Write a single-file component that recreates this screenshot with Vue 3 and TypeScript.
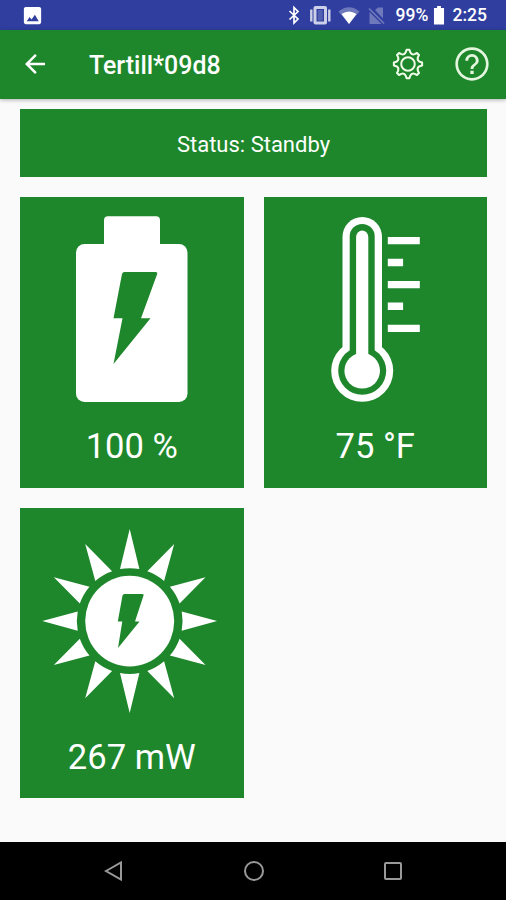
<script setup lang="ts">
interface Ray {
  angle: number
  length: number
}

const batteryLevel = 100
const temperature = 75
const power = 267

const lengths = [92, 89, 87.6, 87.4, 87.6, 89]
const rays: Ray[] = Array.from({ length: 12 }, (_, i) => ({ angle: i * 30, length: lengths[i % 6] }))

const rayPath = (length: number): string => `M0 ${-length} L9.7 -52 A53 53 0 0 0 -9.7 -52 Z`

// Outline of the settings gear: eight teeth joined by rounded valleys.
const gearPath = ((): string => {
  const teeth = 8
  const point = (radius: number, turn: number): string => {
    const a = (turn / teeth) * Math.PI * 2 - Math.PI / 2
    return `${(radius * Math.cos(a)).toFixed(2)} ${(radius * Math.sin(a)).toFixed(2)}`
  }
  const parts: string[] = []
  for (let i = 0; i < teeth; i++) {
    parts.push(`${i === 0 ? 'M' : 'L'}${point(11.9, i - 0.24)}`)
    parts.push(`L${point(14.2, i - 0.13)}`)
    parts.push(`L${point(14.2, i + 0.13)}`)
    parts.push(`L${point(11.9, i + 0.24)}`)
    parts.push(`Q${point(9.6, i + 0.5)} ${point(11.9, i + 0.76)}`)
  }
  return parts.join(' ') + 'Z'
})()
</script>

<template>
  <div class="screen">
    <div class="status-bar">
      <svg class="picture" viewBox="0 0 24 24"><path d="M21 19V5c0-1.100-.9-2-2-2H5c-1.100 0-2 .9-2 2v14c0 1.100.9 2 2 2h14c1.100 0 2-.9 2-2zM6 18l3-4.500 2 2.600 3.500-5L18.500 18z" /></svg>
      <svg class="signals" viewBox="283 0 105 30">
        <path class="line" d="M289.500 11l8.500 8-4 4V7.500l4 4-8.500 8" />
        <g class="dim">
          <rect x="313.500" y="6" width="13.500" height="18.500" rx="2" />
          <path class="line wide" d="M311.300 9.500v12M329.300 9.500v12" />
        </g>
        <rect class="hole" x="316.500" y="9" width="7.500" height="12.500" />
        <rect class="core" x="317.800" y="10" width="4.900" height="10.500" />
        <path class="faint" d="M338.500 11.500Q349 3 359.500 11.500L349 24z" />
        <path d="M341.500 14Q349 9 356.500 14L349 24z" />
        <path class="faint" d="M369.500 12L381.500 24H369.500zM375 10L378 7.500H383V18.500z" />
        <path class="faint line" d="M369 8.500l15 15" />
      </svg>
      <span class="percent">99%</span>
      <svg class="cell" viewBox="0 0 12 20"><path d="M4 0h4v2h3.300v17.500h-10.600V2H4z" /></svg>
      <span class="clock">2:25</span>
    </div>

    <header class="app-bar">
      <svg class="back" viewBox="0 0 24 24"><path d="M20 11H7.830l5.590-5.590L12 4l-8 8 8 8 1.410-1.410L7.830 13H20v-2z" /></svg>
      <h1>Tertill*09d8</h1>
      <svg class="gear" viewBox="-16 -16 32 32">
        <path :d="gearPath" />
        <circle r="6.800" />
      </svg>
      <svg class="help" viewBox="0 0 24 24"><path d="M11 18h2v-2h-2v2zm1-16C6.480 2 2 6.480 2 12s4.480 10 10 10 10-4.480 10-10S17.520 2 12 2zm0 18.400c-4.630 0-8.400-3.770-8.400-8.400S7.370 3.600 12 3.600s8.400 3.770 8.400 8.400-3.770 8.400-8.400 8.400zM12 6c-2.210 0-4 1.790-4 4h1.700c0-1.270 1.030-2.300 2.300-2.300s2.300 1.030 2.300 2.300c0 2-3.150 1.750-3.150 5h1.700c0-2.250 3.150-2.500 3.150-5 0-2.210-1.790-4-4-4z" /></svg>
    </header>

    <main>
      <div class="card state">Status: Standby</div>

      <section class="card tile">
        <svg class="art" viewBox="20 197.400 223.500 220">
          <rect x="104" y="216.700" width="56" height="40" rx="4" />
          <rect x="76" y="244.500" width="111.500" height="158" rx="8.500" />
          <path class="bolt" d="M124.500 272.500H155.500Q158 272.500 157 275L141 318.600H150.500L113.500 364.500L122.500 318.600H113.500L122 274.500Q122.500 272.500 124.500 272.500Z" />
        </svg>
        <p>{{ batteryLevel }} %</p>
      </section>

      <section class="card tile">
        <svg class="art" viewBox="263.500 197.400 223.500 220">
          <rect x="342" y="217.500" width="39.500" height="150" rx="19.700" />
          <circle cx="361.700" cy="371.200" r="31" />
          <g class="bore">
            <rect x="349.200" y="224.300" width="25" height="140" rx="12.500" />
            <circle cx="361.700" cy="371.200" r="24" />
          </g>
          <rect x="355.600" y="231" width="12.200" height="140" rx="6.100" />
          <circle cx="361.700" cy="371.200" r="17.800" />
          <path d="M387.300 237.400h32v7.300h-32zM387.300 259.200h15.300v7.400h-15.300zM387.300 281.300h32v7.300h-32zM387.300 303h15.300v7.400h-15.300zM387.300 325.200h32v7.300h-32z" />
        </svg>
        <p>{{ temperature }} °F</p>
      </section>

      <section class="card tile">
        <svg class="art" viewBox="20 507.900 223.500 220">
          <g transform="translate(129.700 621)">
            <path v-for="ray in rays" :key="ray.angle" :d="rayPath(ray.length)" :transform="`rotate(${ray.angle})`" />
            <ellipse rx="44.500" ry="45.300" />
          </g>
          <path class="bolt" d="M124.500 594H142.500Q144 594 143.500 595.500L135 621.300H139.500L118 648L122.300 621.300H117.800L122.500 595.500Q123 594 124.500 594Z" />
        </svg>
        <p>{{ power }} mW</p>
      </section>
    </main>

    <nav>
      <svg viewBox="0 0 24 24"><path d="M4 12L19 3.500V20.500Z" /></svg>
      <svg viewBox="0 0 24 24"><circle cx="12" cy="12" r="9" /></svg>
      <svg viewBox="0 0 24 24"><rect x="4" y="4" width="16" height="16" rx="1" /></svg>
    </nav>
  </div>
</template>

<style>
body {
  margin: 0;
  background: #fafafa;
}
</style>

<style scoped>
.screen {
  display: flex;
  flex-direction: column;
  width: 506px;
  height: 900px;
  overflow: hidden;
  background: #fafafa;
  color: #fff;
  font-family: Roboto, "Liberation Sans", sans-serif;
}

svg {
  display: block;
  flex: none;
  fill: #fff;
}

.status-bar {
  display: flex;
  align-items: center;
  height: 30px;
  box-sizing: border-box;
  padding-left: 21px;
  background: #303f9f;
  font-size: 17.500px;
  font-weight: 500;
  line-height: 32px;
}

.picture {
  width: 23px;
  height: 23px;
}

.signals {
  width: 105px;
  height: 30px;
  margin-left: 239px;
}

.line {
  fill: none;
  stroke: #fff;
  stroke-width: 1.700;
}

.wide {
  stroke-width: 2.400;
}

.dim {
  opacity: 0.75;
}

.faint {
  opacity: 0.3;
}

.hole {
  fill: #303f9f;
}

.core {
  fill: #5361b3;
}

.percent {
  width: 37px;
  margin-left: 7.500px;
  white-space: nowrap;
}

.cell {
  width: 12px;
  height: 19px;
}

.clock {
  margin-left: 8px;
}

.app-bar {
  display: flex;
  position: relative;
  align-items: center;
  height: 69px;
  box-sizing: border-box;
  flex: none;
  padding: 0 0 1px 20px;
  background: #1e872b;
  box-shadow: 0 1px 4px rgba(0, 0, 0, 0.3);
}

.back {
  width: 30px;
  height: 30px;
}

h1 {
  width: 302px;
  margin: 3px 0 0 39px;
  font-size: 24.900px;
  font-weight: 500;
  line-height: 30px;
}

.gear {
  width: 32px;
  height: 32px;
  margin-left: 0.500px;
  fill: none;
  stroke: #f0fbe8;
  stroke-width: 2;
  stroke-linejoin: round;
}

.help {
  width: 40px;
  height: 40px;
  margin-left: 28.500px;
  fill: #e5f6df;
}

main {
  display: grid;
  grid-template-columns: 223.500px 223.500px;
  grid-template-rows: 68.400px 290.500px 290.500px;
  gap: 20px;
  flex: 1;
  padding: 10px 20px 0;
  align-content: start;
}

.card {
  background: #1e872b;
}

.state {
  grid-column: 1 / -1;
  font-size: 22px;
  line-height: 71px;
  text-align: center;
}

.art {
  width: 223.500px;
  height: 220px;
}

.bolt,
.bore {
  fill: #1e872b;
}

.tile p {
  margin: 7px 0 0;
  font-size: 34.600px;
  line-height: 44px;
  text-align: center;
}

nav {
  display: flex;
  justify-content: space-between;
  align-items: center;
  height: 58px;
  box-sizing: border-box;
  padding: 0 101px 0 102px;
  background: #000;
}

nav svg {
  width: 24px;
  height: 24px;
  fill: none;
  stroke: #999;
  stroke-width: 2;
}
</style>
